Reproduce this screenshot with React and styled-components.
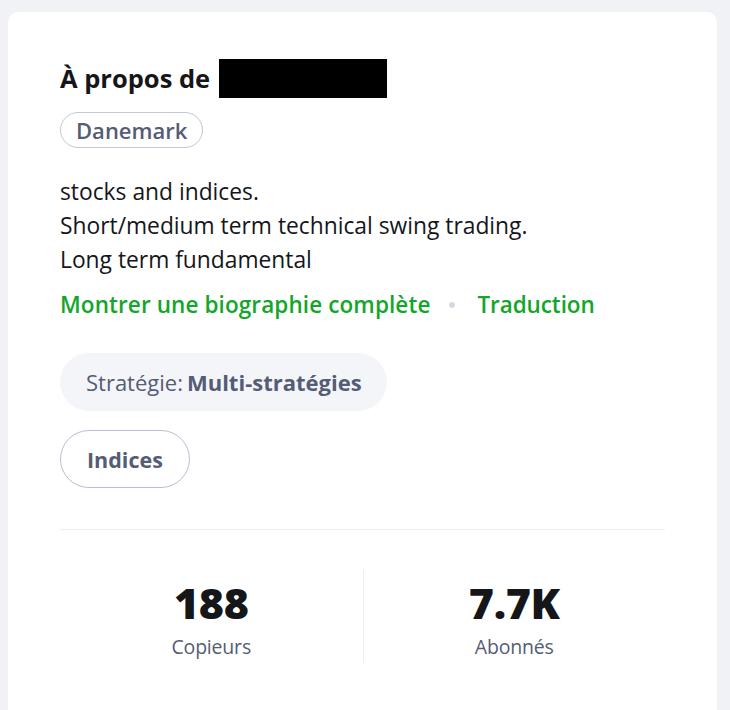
import React from 'react';
import styled, { createGlobalStyle } from 'styled-components';

const GlobalStyle = createGlobalStyle`
  html, body {
    margin: 0;
    padding: 0;
    background: #f0f2f5;
    font-family: "Open Sans", "Noto Sans", sans-serif;
  }
`;

const Page = styled.div`
  padding: 12px 13px 0 8px;
  min-height: 710px;
  box-sizing: border-box;
`;

const Card = styled.section`
  background: #ffffff;
  border-radius: 10px 10px 0 0;
  padding: 46px 52px 60px;
  min-height: 698px;
  box-sizing: border-box;
`;

const Title = styled.h2`
  margin: 0;
  display: flex;
  align-items: center;
  gap: 9px;
  height: 40px;
  font-size: 25.5px;
  line-height: 40px;
  font-weight: 700;
  color: #15161a;
`;

const Redacted = styled.span`
  display: inline-block;
  width: 168px;
  height: 39px;
  background: #000;
`;

const TagRow = styled.div`
  margin-top: 14px;
  display: flex;
`;

const Tag = styled.span`
  display: inline-flex;
  align-items: center;
  height: 36px;
  padding: 0 15px;
  border: 1.5px solid #c3c7d6;
  border-radius: 20px;
  font-size: 22px;
  font-weight: 600;
  color: #555c75;
  box-sizing: border-box;
`;

const Bio = styled.p`
  margin: 27px 0 0;
  font-size: 22.8px;
  line-height: 34px;
  color: #15161a;
  white-space: pre-line;
`;

const Links = styled.div`
  display: flex;
  align-items: center;
  gap: 14px;
  margin-top: 13px;
  height: 30px;
`;

const Link = styled.a`
  font-size: 22.5px;
  line-height: 30px;
  font-weight: 600;
  color: #13a62a;
  text-decoration: none;
  letter-spacing: ${p => (p.$tight ? '-0.1px' : '0.1px')};
`;

const Dot = styled.span`
  width: 6px;
  height: 6px;
  border-radius: 50%;
  background: #d5d8e2;
  margin: 0 9px 0 4px;
`;

const Stack = styled.div`
  display: flex;
  flex-direction: column;
  align-items: flex-start;
  gap: 19px;
  margin-top: 33px;
`;

const Strategy = styled.div`
  display: inline-flex;
  align-items: center;
  gap: 4px;
  height: 58px;
  padding: 0 25px 0 26px;
  border-radius: 29px;
  background: #f4f5f8;
  font-size: 22px;
  color: #555c75;
  box-sizing: border-box;
`;

const Strong = styled.b`
  font-weight: 700;
`;

const Pill = styled.span`
  display: inline-flex;
  align-items: center;
  height: 58px;
  padding: 0 26px;
  border: 1.5px solid #b9bed1;
  border-radius: 29px;
  font-size: 21.5px;
  font-weight: 700;
  color: #555c75;
  box-sizing: border-box;
`;

const Divider = styled.hr`
  margin: 41px 0 0;
  border: none;
  border-top: 1px solid #eceef2;
`;

const Stats = styled.div`
  display: grid;
  grid-template-columns: 1fr 1fr;
  margin-top: 40px;
`;

const Stat = styled.div`
  display: flex;
  flex-direction: column;
  align-items: center;
  padding: 7px 0 3px;
  border-left: ${p => (p.$divided ? '1px solid #eceef2' : 'none')};
`;

const Value = styled.div`
  font-size: 43px;
  font-weight: 800;
  line-height: 52px;
  color: #15161a;
  letter-spacing: -0.4px;
`;

const Label = styled.div`
  font-size: 19.5px;
  line-height: 26px;
  color: #555c75;
  margin-top: 5px;
  letter-spacing: -0.2px;
`;

export default function App() {
  return (
    <>
      <GlobalStyle />
      <Page>
        <Card>
          <Title>
            À propos de <Redacted />
          </Title>
          <TagRow>
            <Tag>Danemark</Tag>
          </TagRow>
          <Bio>
            {'stocks and indices.\nShort/medium term technical swing trading.\nLong term fundamental'}
          </Bio>
          <Links>
            <Link href="#">Montrer une biographie complète</Link>
            <Dot />
            <Link href="#" $tight>Traduction</Link>
          </Links>
          <Stack>
            <Strategy>
              Stratégie: <Strong>Multi-stratégies</Strong>
            </Strategy>
            <Pill>Indices</Pill>
          </Stack>
          <Divider />
          <Stats>
            <Stat>
              <Value>188</Value>
              <Label>Copieurs</Label>
            </Stat>
            <Stat $divided>
              <Value>7.7K</Value>
              <Label>Abonnés</Label>
            </Stat>
          </Stats>
        </Card>
      </Page>
    </>
  );
}
